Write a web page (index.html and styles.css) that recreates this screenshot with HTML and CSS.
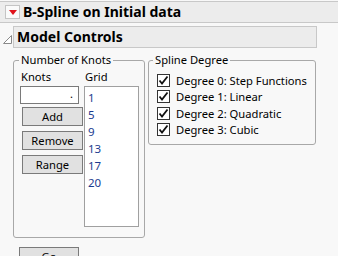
FILE: index.html
```html
<!DOCTYPE html>
<html>
<head>
<meta charset="utf-8">
<link rel="stylesheet" href="styles.css">
</head>
<body>
<div class="titlebar">
  <span class="menu-icon"><svg width="8" height="5" viewBox="0 0 8 5"><path d="M0 0H8L4 5Z" fill="#e0131b"/></svg></span>
  <span class="title">B-Spline on Initial data</span>
</div>
<div class="outline">
  <span class="disclosure"><svg width="9" height="9" viewBox="0 0 9 9"><path d="M8.5 0.5V8.5H0.5Z" fill="#fff" stroke="#8a8a8a"/></svg></span>
  <div class="outline-header">Model Controls</div>
</div>
<div class="groups">
  <fieldset class="group knots">
    <legend>Number of Knots</legend>
    <div class="knots-grid">
      <div class="col-left">
        <div class="label">Knots</div>
        <div class="input">.</div>
        <button class="btn">Add</button>
        <button class="btn">Remove</button>
        <button class="btn">Range</button>
      </div>
      <div class="col-right">
        <div class="label">Grid</div>
        <ul class="listbox">
          <li>1</li><li>5</li><li>9</li><li>13</li><li>17</li><li>20</li>
        </ul>
      </div>
    </div>
  </fieldset>
  <fieldset class="group spline">
    <legend>Spline Degree</legend>
    <div class="checks">
      <label class="check"><span class="box"><svg width="11" height="11" viewBox="0 0 11 11"><path d="M1.5 5.5L4 8.5L9.5 1.5" fill="none" stroke="#111" stroke-width="1.8"/></svg></span>Degree 0: Step Functions</label>
      <label class="check"><span class="box"><svg width="11" height="11" viewBox="0 0 11 11"><path d="M1.5 5.5L4 8.5L9.5 1.5" fill="none" stroke="#111" stroke-width="1.8"/></svg></span>Degree 1: Linear</label>
      <label class="check"><span class="box"><svg width="11" height="11" viewBox="0 0 11 11"><path d="M1.5 5.5L4 8.5L9.5 1.5" fill="none" stroke="#111" stroke-width="1.8"/></svg></span>Degree 2: Quadratic</label>
      <label class="check"><span class="box"><svg width="11" height="11" viewBox="0 0 11 11"><path d="M1.5 5.5L4 8.5L9.5 1.5" fill="none" stroke="#111" stroke-width="1.8"/></svg></span>Degree 3: Cubic</label>
    </div>
  </fieldset>
</div>
<div class="go-row"><button class="btn go">Go</button></div>
</body>
</html>
```
FILE: styles.css
```css
* { box-sizing: border-box; }
html, body { margin: 0; padding: 0; }
body {
  background: #f8f8f8;
  font-family: "Noto Sans", "Open Sans", sans-serif;
  font-size: 11px;
  color: #000;
  width: 338px;
  height: 256px;
  overflow: hidden;
}
.titlebar {
  margin-top: 1px;
  height: 22px;
  background: #ececec;
  border-top: 1px solid #c8c8c8;
  border-bottom: 1px solid #c8c8c8;
  display: flex;
  align-items: center;
  padding-left: 5px;
}
.menu-icon {
  width: 15px;
  height: 14px;
  border: 1px solid #c4c4c4;
  background: #fafafa;
  display: flex;
  align-items: center;
  justify-content: center;
  margin-right: 3px;
}
.title {
  font-weight: bold;
  font-size: 14px;
  line-height: 20px;
}
.outline {
  display: flex;
  align-items: center;
  margin-top: 3px;
  padding-left: 3px;
}
.disclosure {
  width: 10px;
  height: 22px;
  display: flex;
  align-items: flex-end;
  padding-bottom: 4px;
}
.outline-header {
  width: 304px;
  height: 22px;
  border: 1px solid #c8c8c8;
  background: #ececec;
  font-weight: bold;
  font-size: 14px;
  line-height: 20px;
  padding-left: 3px;
}
.groups {
  display: flex;
  align-items: flex-start;
  margin-top: 5px;
  padding-left: 13px;
  gap: 3px;
}
.group {
  margin: 0;
  border: 1px solid #a8a8a8;
  border-radius: 3px;
  padding: 0 5px 0 6px;
}
.group legend {
  padding: 0 2px;
  margin-left: -1px;
  line-height: 14px;
  font-size: 11.2px;
  white-space: nowrap;
}
.spline legend {
  margin-left: -2px;
}
.knots {
  width: 132px;
  height: 185px;
}
.spline {
  width: 168px;
  height: 92px;
}
.knots-grid {
  display: grid;
  grid-template-columns: 64px 55px;
  margin-top: 2px;
}
.label {
  line-height: 16px;
  height: 17px;
  padding-left: 1px;
  font-size: 11.2px;
}
.input {
  width: 59px;
  height: 18px;
  border: 1px solid #7a7a7a;
  background: #fff;
  text-align: right;
  padding-right: 5px;
  line-height: 14px;
  margin-bottom: 3px;
}
.btn {
  display: block;
  font-family: inherit;
  font-size: 11.2px;
  width: 61px;
  height: 19px;
  margin: 0 0 5px 2px;
  padding: 0;
  border: 1px solid #7a7a7a;
  background: #e1e1e1;
  color: #000;
  line-height: 16px;
}
.listbox {
  list-style: none;
  margin: 0;
  padding: 2px 0 0 3px;
  width: 55px;
  height: 141px;
  border: 1px solid #a0a0a0;
  background: #fff;
  color: #1b3b8f;
  font-size: 11.5px;
}
.listbox li {
  line-height: 17px;
  height: 17px;
}
.checks {
  display: flex;
  flex-direction: column;
  margin-top: 5px;
  padding-left: 2px;
}
.check {
  display: flex;
  align-items: center;
  height: 16.5px;
  white-space: nowrap;
  font-size: 11.2px;
}
.box {
  width: 13px;
  height: 13px;
  border: 1px solid #333;
  background: #fff;
  margin-right: 6px;
  display: flex;
  align-items: center;
  justify-content: center;
  flex: none;
}
.go-row {
  padding-left: 19px;
  margin-top: 9px;
}
.btn.go {
  margin: 0;
  width: 60px;
  height: 20px;
}
```
